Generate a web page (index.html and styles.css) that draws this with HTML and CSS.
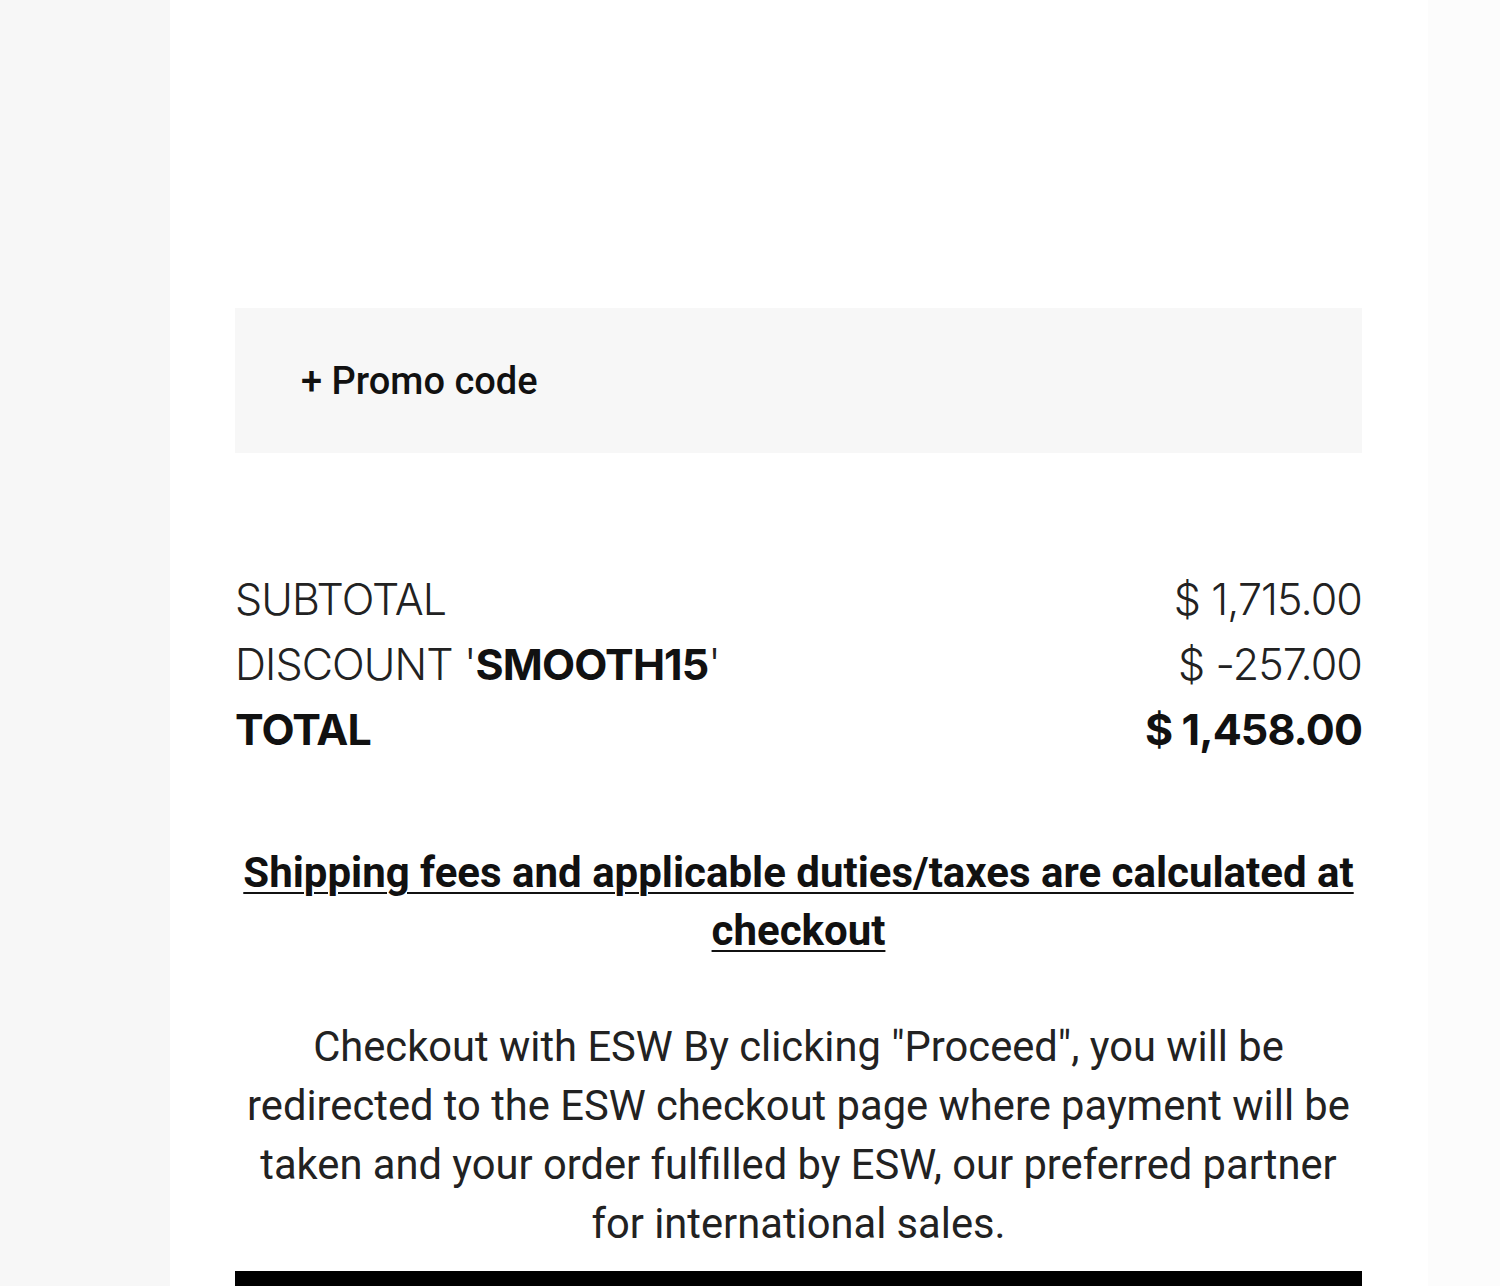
FILE: index.html
```html
<!DOCTYPE html>
<html>
<head>
<meta charset="utf-8">
<link rel="stylesheet" href="styles.css">
</head>
<body>
<div class="page">
  <aside class="side-left"></aside>
  <main class="panel">
    <div class="promo">+ Promo code</div>
    <div class="totals">
      <div class="row"><span>SUBTOTAL</span><span>$ 1,715.00</span></div>
      <div class="row"><span>DISCOUNT '<b>SMOOTH15</b>'</span><span>$ -257.00</span></div>
      <div class="row total"><span>TOTAL</span><span>$ 1,458.00</span></div>
    </div>
    <p class="shipping"><a href="#">Shipping fees and applicable duties/taxes are calculated at checkout</a></p>
    <p class="esw">Checkout with ESW By clicking "Proceed", you will be redirected to the ESW checkout page where payment will be taken and your order fulfilled by ESW, our preferred partner for international sales.</p>
    <div class="proceed"></div>
  </main>
  <aside class="side-right"></aside>
</div>
</body>
</html>
```
FILE: styles.css
```css
html, body {
  margin: 0;
  padding: 0;
  height: 100%;
  overflow: hidden;
}
body {
  font-family: Roboto, "Liberation Sans", sans-serif;
  color: #111;
}
.page {
  display: flex;
  height: 1286px;
  overflow: hidden;
}
.side-left {
  width: 170px;
  background: #f7f7f7;
  flex: none;
}
.side-right {
  flex: 1;
  background: #fcfcfc;
}
.panel {
  width: 1258px;
  height: 1286px;
  overflow: hidden;
  flex: none;
  background: #fff;
  padding: 308px 66px 0 65px;
  box-sizing: border-box;
  display: flex;
  flex-direction: column;
}
.panel > * {
  flex: none;
}
.promo {
  height: 145px;
  background: #f7f7f7;
  display: flex;
  align-items: center;
  padding-left: 66px;
  font-size: 38px;
  font-weight: 500;
  color: #111;
}
.totals {
  margin-top: 114px;
  display: flex;
  flex-direction: column;
}
.row {
  display: flex;
  justify-content: space-between;
  font-family: Inter, Roboto, sans-serif;
  font-size: 43px;
  font-weight: 300;
  line-height: 65px;
  letter-spacing: -0.9px;
  color: #222;
}
.row b {
  font-weight: 700;
  color: #111;
}
.row.total {
  font-weight: 700;
  color: #111;
}
.shipping {
  margin: 82px 0 0;
  text-align: center;
  font-size: 42px;
  font-weight: 700;
  line-height: 58px;
}
.shipping a {
  color: #111;
  text-decoration: underline;
  text-underline-offset: 5px;
  text-decoration-thickness: 2px;
}
.esw {
  margin: 57px 0 0;
  text-align: center;
  font-size: 41.7px;
  font-weight: 400;
  line-height: 59px;
  color: #222;
}
.proceed {
  margin-top: 18px;
  height: 80px;
  background: #000;
}
```
